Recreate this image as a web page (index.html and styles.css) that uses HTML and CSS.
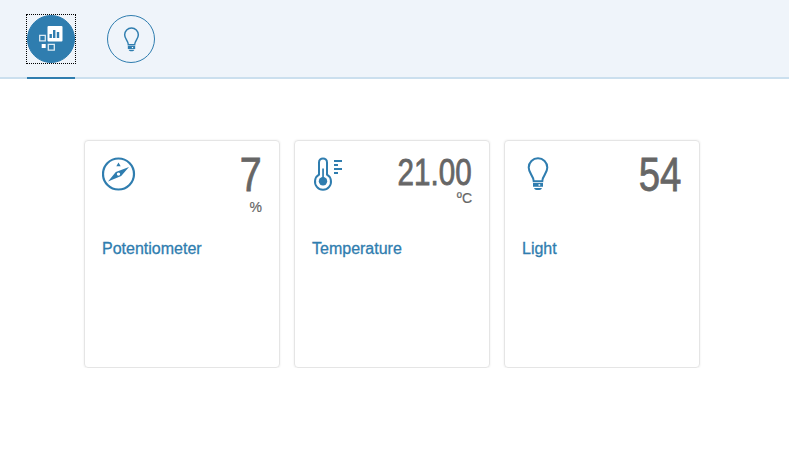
FILE: index.html
```
<!DOCTYPE html>
<html lang="en">
<head>
<meta charset="utf-8">
<title>Sensors</title>
<link rel="stylesheet" href="styles.css">
</head>
<body>
<svg width="0" height="0" class="defs" aria-hidden="true">
  <symbol id="bulb" viewBox="0 0 22 34">
    <path d="M6.700 24.200C6.500 18.500 1.700 16.500 1.700 10.600a9.300 9.300 0 0 1 18.600 0c0 5.900-4.800 7.900-5 13.600z" fill="none" stroke="currentColor" stroke-width="2"/>
    <path d="M6 26h10v3.800H6zM7 31h8q-.6 2-2.600 2H9.600Q7.600 33 7 31z" fill="currentColor"/>
    <path class="hole" d="M11.500 27.200h1.700v1.500h-1.700z"/>
  </symbol>
</svg>
<nav class="tabs">
  <a class="tab active"><span class="circle">
    <svg width="24" height="26" viewBox="0 0 24 26">
      <path fill="#fff" d="M9.500 0h13q1 0 1 1v13.500q0 1-1 1h-13q-1 0-1-1V1q0-1 1-1z"/>
      <path fill="#2f7daf" d="M10.500 8h2.400v4h-2.400zM14 4h2.400v8H14zM17.800 6h2.400v6h-2.400z"/>
      <path fill="none" stroke="#dceaf3" stroke-width="1.300" d="M.7 9.300h5.600v5.600H.7zM9.300 18.300h6v5.800h-6z"/>
      <path fill="#fff" d="M2.700 18h4v4h-4z"/>
    </svg></span></a>
  <a class="tab"><span class="circle"><svg class="small-bulb"><use href="#bulb"/></svg></span></a>
</nav>
<main class="tiles">
  <section class="tile">
    <div class="top">
      <svg class="icon" width="34" height="34" viewBox="0 0 34 34">
        <circle cx="16.500" cy="17" r="15.500" fill="none" stroke="currentColor" stroke-width="2.200"/>
        <path fill="currentColor" fill-rule="evenodd" d="M27 9.900 19.200 19.100 6 24.500 13.800 15.100zM16.500 15.400a1.700 1.700 0 1 0 0 3.400 1.700 1.700 0 0 0 0-3.400zM16.500 5.600l2.200 3.600h-4.400z"/>
      </svg>
      <div class="value"><span class="number">7</span><span class="unit">%</span></div>
    </div>
    <h2>Potentiometer</h2>
  </section>
  <section class="tile">
    <div class="top">
      <svg class="icon" width="34" height="34" viewBox="0 0 34 34">
        <path fill="none" stroke="currentColor" stroke-width="2" d="M7 17.700V5.400a4 4 0 0 1 8 0v12.300a8 8 0 1 1-8 0z"/>
        <circle cx="11" cy="24.200" r="4.200" fill="currentColor"/>
        <path fill="currentColor" d="M10.200 11.500h1.700V22h-1.700zM22 3h8v2h-8zM22 7h4v2h-4zM22 11h8v2h-8zM22 15h4v2h-4z"/>
      </svg>
      <div class="value"><span class="number long">21.00</span><span class="unit">ºC</span></div>
    </div>
    <h2>Temperature</h2>
  </section>
  <section class="tile">
    <div class="top">
      <svg class="icon bulb"><use href="#bulb"/></svg>
      <div class="value"><span class="number pair">54</span></div>
    </div>
    <h2>Light</h2>
  </section>
</main>
</body>
</html>
```
FILE: styles.css
```
*, *::before { box-sizing: border-box; }
body { margin: 0; background: #fff; font-family: "Liberation Sans", Arial, sans-serif; color: #666; overflow: hidden; }
.defs { position: absolute; }
.tabs { display: flex; gap: 32px; height: 79px; padding: 15px 27px 0; background: #eff4fa; border-bottom: 2px solid #cbdfee; }
.tab { width: 48px; height: 64px; color: #2f7daf; }
.circle { display: flex; align-items: center; justify-content: center; width: 48px; height: 48px; border: 1px solid #2f7daf; border-radius: 50%; }
.active { border-bottom: 2px solid #2f7daf; }
.active .circle { background: #2f7daf; }
.active::before { content: ""; position: absolute; left: 26px; top: 14px; width: 50px; height: 50px; border: 1px dotted #000; }
.small-bulb { width: 17px; height: 25px; }
.hole { fill: #fff; }
.tiles { display: flex; gap: 14px; padding: 61px 84px 0; }
.tile { width: 196px; height: 228px; padding: 16px 17px; border: 1px solid #e5e5e5; border-radius: 4px; box-shadow: 0 0 2px rgba(0, 0, 0, .1); }
.top { display: flex; justify-content: space-between; height: 82px; }
.icon { flex: none; color: #2f7daf; }
.bulb { width: 22px; height: 34px; margin-left: 5px; }
.value { display: flex; flex-direction: column; align-items: flex-end; }
.number { font-size: 48px; line-height: 36px; height: 41px; transform: scaleX(.82); transform-origin: right; -webkit-text-stroke: .8px #666; }
.long { font-size: 37px; line-height: 31px; height: 32px; transform: scaleX(.8); }
.pair { margin-right: 1px; transform: scaleX(.8); }
.unit { font-size: 14px; line-height: 18px; -webkit-text-stroke: .2px #666; }
h2 { margin: 0; font-size: 16px; font-weight: 400; line-height: 20px; color: #2f7daf; -webkit-text-stroke: .3px #2f7daf; }
```
